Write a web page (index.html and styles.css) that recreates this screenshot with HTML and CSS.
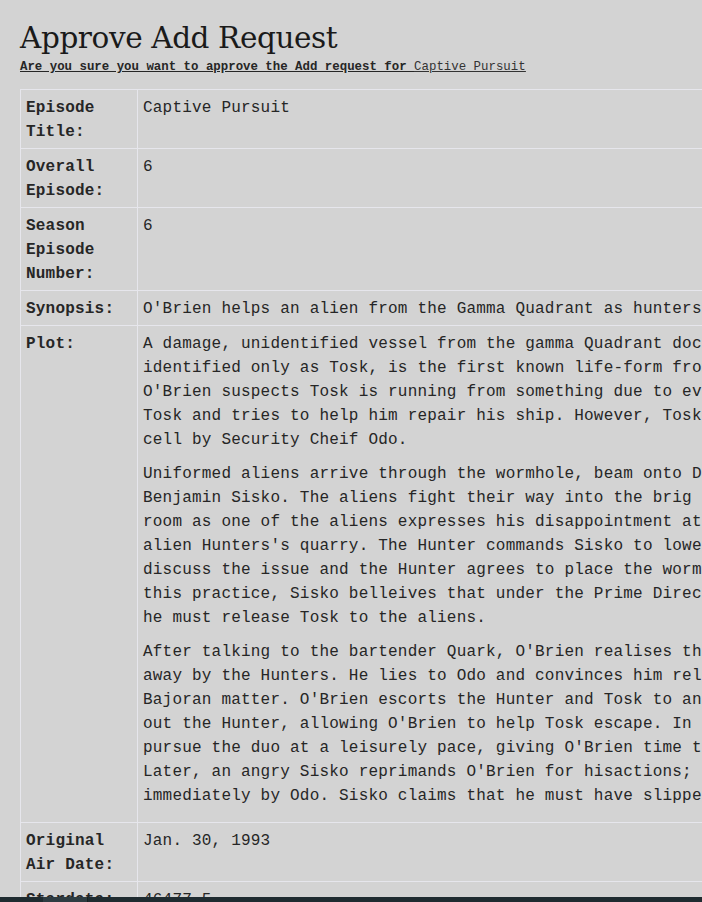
FILE: index.html
```html
<!DOCTYPE html>
<html lang="en">
<head>
<meta charset="utf-8">
<title>Approve Add Request</title>
<link rel="stylesheet" href="styles.css">
</head>
<body>
<main class="page">
  <h1 class="title">Approve Add Request</h1>
  <p class="confirm">Are you sure you want to approve the Add request for <a class="confirm-link" href="#">Captive Pursuit</a></p>
  <table class="details">
    <colgroup>
      <col class="col-label">
      <col class="col-value">
    </colgroup>
    <tbody>
      <tr>
        <th class="label">Episode Title:</th>
        <td class="value">Captive Pursuit</td>
      </tr>
      <tr>
        <th class="label">Overall Episode:</th>
        <td class="value">6</td>
      </tr>
      <tr>
        <th class="label">Season Episode Number:</th>
        <td class="value">6</td>
      </tr>
      <tr>
        <th class="label">Synopsis:</th>
        <td class="value">O'Brien helps an alien from the Gamma Quadrant as hunters pursue him through the station.</td>
      </tr>
      <tr>
        <th class="label">Plot:</th>
        <td class="value">
          <p class="para">A damage, unidentified vessel from the gamma Quadrant docks at Deep Space 9. Its pilot,<br>identified only as Tosk, is the first known life-form from the Gamma Quadrant to visit.<br>O'Brien suspects Tosk is running from something due to evidence of weapons fire. He befriends<br>Tosk and tries to help him repair his ship. However, Tosk is caught and locked in a holding<br>cell by Security Cheif Odo.</p>
          <p class="para">Uniformed aliens arrive through the wormhole, beam onto Deep Space 9 and confront Commander<br>Benjamin Sisko. The aliens fight their way into the brig and reach the security office holding<br>room as one of the aliens expresses his disappointment at Tosk's capture. Tosk is revealed as the<br>alien Hunters's quarry. The Hunter commands Sisko to lower the station's shields so they may<br>discuss the issue and the Hunter agrees to place the wormhole under guard. Though he dislikes<br>this practice, Sisko belleives that under the Prime Directive he cannot interfere, and that<br>he must release Tosk to the aliens.</p>
          <p class="para">After talking to the bartender Quark, O'Brien realises that Tosk does not wish to be taken<br>away by the Hunters. He lies to Odo and convinces him release Tosk, claiming it is a<br>Bajoran matter. O'Brien escorts the Hunter and Tosk to an airlock, where Tosk knocks<br>out the Hunter, allowing O'Brien to help Tosk escape. In turn, the Hunters decide to<br>pursue the duo at a leisurely pace, giving O'Brien time to get Tosk back to his ship.<br>Later, an angry Sisko reprimands O'Brien for hisactions; the Hunter is escorted away<br>immediately by Odo. Sisko claims that he must have slipped while O'Brien was at work.</p>
        </td>
      </tr>
      <tr>
        <th class="label">Original Air Date:</th>
        <td class="value">Jan. 30, 1993</td>
      </tr>
      <tr>
        <th class="label">Stardate:</th>
        <td class="value">46477.5</td>
      </tr>
      <tr>
        <th class="label">Status:</th>
        <td class="value">Pending</td>
      </tr>
    </tbody>
  </table>
</main>
<div class="hscroll"><div class="hscroll-thumb"></div></div>
</body>
</html>
```
FILE: styles.css
```css
html {
  overflow: hidden;
  background: #d3d3d3;
}
body {
  margin: 0;
  background: #d3d3d3;
  color: #262626;
  font-family: "Liberation Mono", "DejaVu Sans Mono", monospace;
}
.page {
  padding: 0 20px;
}
.title {
  margin: 0;
  padding-top: 18px;
  font-family: "DejaVu Serif", "Liberation Serif", serif;
  font-weight: normal;
  font-size: 29.5px;
  letter-spacing: -0.4px;
  line-height: 40px;
  color: #1a1a1a;
}
.confirm {
  margin: 1px 0 0;
  font-size: 12.4px;
  line-height: 16px;
  font-weight: bold;
  text-decoration: underline;
  white-space: nowrap;
}
.confirm-link {
  color: #333333;
  font-weight: normal;
}
.details {
  margin-top: 14px;
  border-collapse: collapse;
  table-layout: fixed;
  width: 1000px;
  white-space: nowrap;
}
.col-label {
  width: 117px;
}
.label,
.value {
  border: 1px solid #e6e6ec;
  padding: 6px 5px 4px;
  vertical-align: top;
  text-align: left;
  font-size: 16px;
  letter-spacing: 0.2px;
  line-height: 24px;
  overflow: hidden;
}
.label {
  white-space: normal;
  font-weight: bold;
}
.value {
  font-weight: normal;
}
.para {
  margin: 0 0 10px;
}
.hscroll {
  position: fixed;
  left: 0;
  right: 0;
  bottom: 0;
  height: 5px;
  background: #1f2b30;
}
.hscroll-thumb {
  margin-left: 43px;
  width: 44px;
  height: 5px;
  background: #2e3c42;
  border-right: 1px solid #18211f;
}
```
